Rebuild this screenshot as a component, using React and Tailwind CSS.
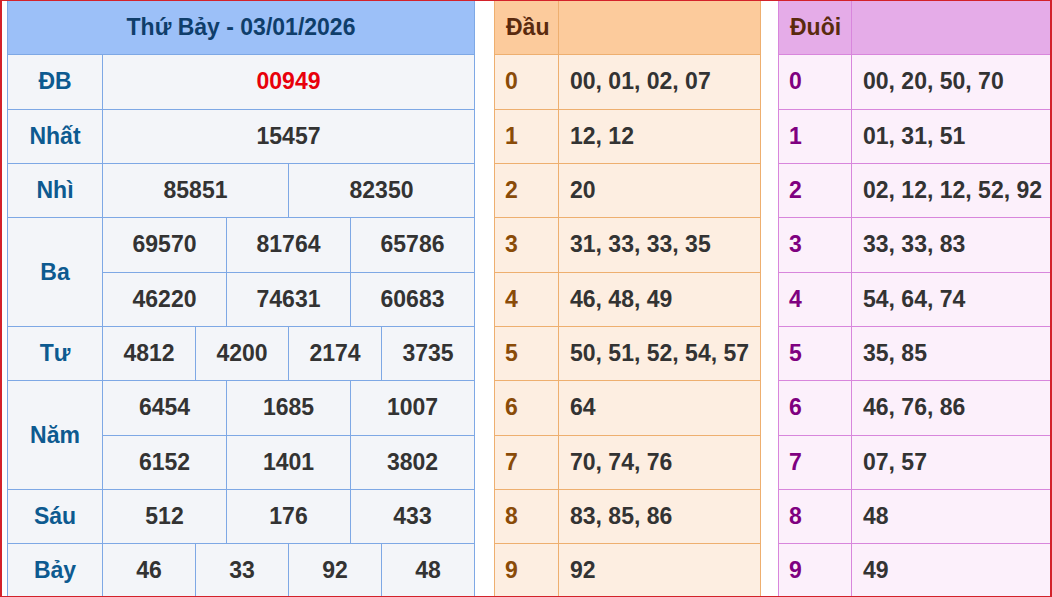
const left = {
  title: "Thứ Bảy - 03/01/2026",
  rows: [
    { label: "ĐB", span: 1, cells: [["00949", "col-span-12", true]] },
    { label: "Nhất", span: 1, cells: [["15457", "col-span-12"]] },
    { label: "Nhì", span: 1, cells: [["85851", "col-span-6"], ["82350", "col-span-6"]] },
    {
      label: "Ba",
      span: 2,
      cells: [
        ["69570", "col-span-4"], ["81764", "col-span-4"], ["65786", "col-span-4"],
        ["46220", "col-span-4"], ["74631", "col-span-4"], ["60683", "col-span-4"],
      ],
    },
    {
      label: "Tư",
      span: 1,
      cells: [["4812", "col-span-3"], ["4200", "col-span-3"], ["2174", "col-span-3"], ["3735", "col-span-3"]],
    },
    {
      label: "Năm",
      span: 2,
      cells: [
        ["6454", "col-span-4"], ["1685", "col-span-4"], ["1007", "col-span-4"],
        ["6152", "col-span-4"], ["1401", "col-span-4"], ["3802", "col-span-4"],
      ],
    },
    { label: "Sáu", span: 1, cells: [["512", "col-span-4"], ["176", "col-span-4"], ["433", "col-span-4"]] },
    {
      label: "Bảy",
      span: 1,
      cells: [["46", "col-span-3"], ["33", "col-span-3"], ["92", "col-span-3"], ["48", "col-span-3"]],
    },
  ],
};

const dau = [
  "00, 01, 02, 07",
  "12, 12",
  "20",
  "31, 33, 33, 35",
  "46, 48, 49",
  "50, 51, 52, 54, 57",
  "64",
  "70, 74, 76",
  "83, 85, 86",
  "92",
];

const duoi = [
  "00, 20, 50, 70",
  "01, 31, 51",
  "02, 12, 12, 52, 92",
  "33, 33, 83",
  "54, 64, 74",
  "35, 85",
  "46, 76, 86",
  "07, 57",
  "48",
  "49",
];

function ResultTable() {
  return (
    <div className="w-[468px] shrink-0 grid grid-cols-[94px_repeat(12,1fr)] grid-rows-[repeat(11,53.33px)] gap-px bg-[#7ea8e5] px-px pb-px">
      <div className="col-span-13 flex items-center justify-center bg-[#9cc0f8] text-[#0f3e6b]">
        {left.title}
      </div>
      {left.rows.map((row) => (
        <div key={row.label} className="contents">
          <div
            className={`flex items-center justify-center bg-[#f3f5f9] text-[#0d5a90] ${row.span === 2 ? "row-span-2" : ""}`}
          >
            {row.label}
          </div>
          {row.cells.map(([v, cls, red], i) => (
            <div
              key={i}
              className={`${cls} flex items-center justify-center bg-[#f3f5f9] ${red ? "text-[#e8000b]" : "text-[#333]"}`}
            >
              {v}
            </div>
          ))}
        </div>
      ))}
    </div>
  );
}

function LotoTable({ title, items, width, labelW, border, head, body, digit, last }) {
  return (
    <div
      className={`${width} shrink-0 grid ${labelW} grid-rows-[repeat(11,53.33px)] gap-px ${border} pl-px pb-px ${last ? "" : "pr-px"}`}
    >
      <div className={`${head} flex items-center pl-[11px] text-[#5a2a0e]`}>{title}</div>
      <div className={head} />
      {items.map((v, i) => (
        <div key={i} className="contents">
          <div className={`${body} ${digit} flex items-center pl-[10px]`}>{i}</div>
          <div className={`${body} text-[#333] flex items-center pl-[11px] whitespace-nowrap`}>{v}</div>
        </div>
      ))}
    </div>
  );
}

export default function App() {
  return (
    <div className="w-[1052px] h-[597px] overflow-hidden bg-white border-l-2 border-r-2 border-t border-b border-[#d3222a] font-['Liberation_Sans',Arial,sans-serif] font-bold text-[23px] leading-none">
      <div className="flex h-full overflow-hidden pl-[5px]">
        <ResultTable />
        <div className="w-[19px] shrink-0" />
        <LotoTable
          title="Đầu"
          items={dau}
          width="w-[267px]"
          labelW="grid-cols-[63px_1fr]"
          border="bg-[#eeaf6f]"
          head="bg-[#fccb9c]"
          body="bg-[#fdeee1]"
          digit="text-[#8a4b08]"
        />
        <div className="w-[17px] shrink-0" />
        <LotoTable
          title="Đuôi"
          items={duoi}
          width="w-[272px]"
          labelW="grid-cols-[72px_1fr]"
          border="bg-[#d886dc]"
          head="bg-[#e5ace8]"
          body="bg-[#fcf0fb]"
          digit="text-[#7f0080]"
          last
        />
      </div>
    </div>
  );
}
